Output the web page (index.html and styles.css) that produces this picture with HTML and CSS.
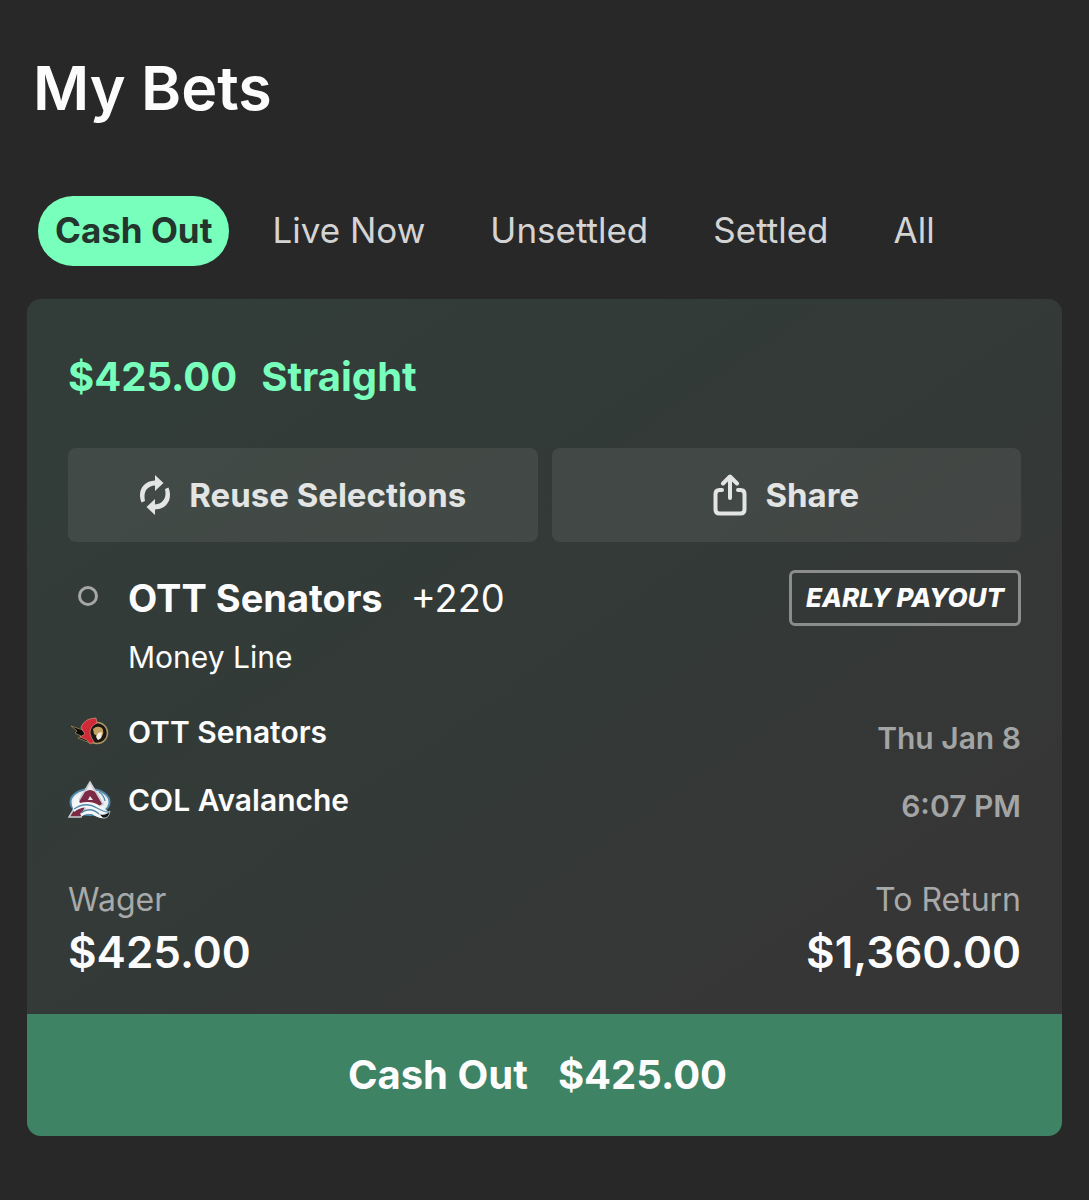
FILE: index.html
```
<!DOCTYPE html>
<html lang="en">
  <head>
    <meta charset="UTF-8" />
    <meta name="viewport" content="width=device-width, initial-scale=1.0" />
    <title>My Bets</title>
    <link rel="stylesheet" href="styles.css">
  </head>
  <body>
    <main class="page">
      <h1 class="title">My Bets</h1>

      <nav class="tabs">
        <button type="button" class="tab active">Cash Out</button>
        <button type="button" class="tab">Live Now</button>
        <button type="button" class="tab">Unsettled</button>
        <button type="button" class="tab">Settled</button>
        <button type="button" class="tab">All</button>
      </nav>

      <section class="bet">
        <div class="bet-body">
          <h2 class="bet-head">
            <span>$425.00</span>
            <span>Straight</span>
          </h2>

          <div class="actions">
            <button type="button" class="action">
              <svg class="icon-reuse" viewBox="0 0 32 42" width="32" height="42" aria-hidden="true">
                <path d="M16 1L24.500 9L16 17V11.500C8 12 4 18 6 27L2.500 28.500C-2 17 4 7 16 6.500Z" fill="#e3e5e4" />
                <path d="M16 41L7.500 33L16 25V30.500C24 30 28 24 26 15L29.500 13.500C34 25 28 35 16 35.500Z" fill="#e3e5e4" />
              </svg>
              Reuse Selections
            </button>
            <button type="button" class="action">
              <svg class="icon-share" viewBox="0 0 34 42" width="34" height="42" aria-hidden="true">
                <g fill="none" stroke="#e3e5e4" stroke-width="4" stroke-linecap="round" stroke-linejoin="round">
                  <path d="M9 16H6.5Q2.5 16 2.5 20V35.5Q2.5 39.500 6.500 39.500H27.500Q31.500 39.500 31.500 35.500V20Q31.500 16 27.500 16H25" />
                  <path d="M17 24V3" />
                  <path d="M10 9.500L17 2.500L24 9.500" />
                </g>
              </svg>
              Share
            </button>
          </div>

          <div class="selection">
            <span class="dot"></span>
            <span class="pick">OTT Senators</span>
            <span class="odds">+220</span>
            <span class="badge">EARLY PAYOUT</span>
          </div>
          <p class="market">Money Line</p>

          <div class="event">
            <ul class="teams">
              <li class="team">
                <svg class="logo" viewBox="0 0 44 44" width="44" height="44" aria-hidden="true">
                  <path d="M3 16L15 20L17 17L20 25L23 33L17 31L10 28L13 26L7 23L9 21Z" fill="#0b0b0b" stroke="#9c8555" stroke-width="0.800" />
                  <circle cx="29" cy="23" r="10.500" fill="#1a1715" stroke="#ad9662" stroke-width="1.500" />
                  <path d="M13 17Q17 8 28 8L29 13Q22 16 22 23Q23 28 26 32L22 34L19 30L12 27L17 24L15 21Z" fill="#d02a38" stroke="#d9a184" stroke-width="0.600" />
                  <path d="M25 19Q29 15 34 18Q37 22 33 28L30 30L29 26L26 24Z" fill="#c3a05f" />
                  <path d="M30 23L34 22L33 28L30 30L28 27Z" fill="#f4eee0" />
                </svg>
                OTT Senators
              </li>
              <li class="team">
                <svg class="logo" viewBox="0 0 44 44" width="44" height="44" aria-hidden="true">
                  <ellipse cx="22" cy="24" rx="19.500" ry="13" fill="#e9eef1" stroke="#5288ac" stroke-width="2" />
                  <path d="M22 4L35 26L29 30L18 28L13 39H1Z" fill="#7b2944" stroke="#c7cdd2" stroke-width="1.500" />
                  <path d="M22 5L27 14Q22 10 17 14Z" fill="#e9edef" />
                  <path d="M22 18L25 22H20Z" fill="#e9edef" />
                  <path d="M4 27Q6 18 14 15Q9 21 12 25Q24 22 32 28Q37 31 41 34L38 38Q30 36 26 32Q16 26 6 34Z" fill="#f4f7f8" />
                  <path d="M12 36Q20 27 29 34Q35 39 41 35L38 40Q30 41 24 36Q19 35 14 38Z" fill="#f4f7f8" />
                  <path d="M6 31Q18 23 29 30Q36 34 40 34M13 35Q22 28 31 36M31 14Q36 17 37 23" fill="none" stroke="#5288ac" stroke-width="1.300" />
                  <path d="M31 36Q37 38 42 33Q41 41 35 40Z" fill="#111719" stroke="#c7cdd2" stroke-width="0.800" />
                </svg>
                COL Avalanche
              </li>
            </ul>
            <div class="when">
              <span>Thu Jan 8</span>
              <span>6:07 PM</span>
            </div>
          </div>

          <dl class="totals">
            <div class="total">
              <dt>Wager</dt>
              <dd>$425.00</dd>
            </div>
            <div class="total right">
              <dt>To Return</dt>
              <dd>$1,360.00</dd>
            </div>
          </dl>
        </div>

        <button type="button" class="cash-out">
          <span>Cash Out</span>
          <span>$425.00</span>
        </button>
      </section>
    </main>
  </body>
</html>
```

FILE: styles.css
```
* {
  box-sizing: border-box;
}
body {
  margin: 0;
  background: #282828;
  color: #fcfcfc;
  font-family: Inter, "Liberation Sans", sans-serif;
}
button {
  border: 0;
  font-family: inherit;
  cursor: pointer;
}
h1,
h2,
p,
ul,
dl,
dd {
  margin: 0;
  padding: 0;
}
.page {
  padding: 48px 27px 64px;
}
.title {
  padding-left: 6px;
  font-size: 61px;
  font-weight: 600;
  line-height: 80px;
}
.tabs {
  display: flex;
  gap: 31px;
  margin: 68px 0 33px;
  padding-left: 11px;
}
.tab {
  height: 70px;
  padding: 0 17px 3px;
  border-radius: 35px;
  background: none;
  color: #d4d4d4;
  font-size: 35px;
  white-space: nowrap;
}
.tab.active {
  margin-right: -5px;
  background: #78ffbb;
  color: #24352d;
  font-weight: 700;
}
.bet {
  border-radius: 14px;
  overflow: hidden;
  background: linear-gradient(145deg, #323d39 0%, #333a37 45%, #363636 75%);
}
.bet-body {
  padding: 54px 41px 34px;
}
.bet-head {
  display: flex;
  gap: 24px;
  color: #78ffbb;
  font-size: 40px;
  font-weight: 700;
  line-height: 48px;
}
.actions {
  display: flex;
  gap: 14px;
  margin: 47px 0 28px;
}
.action {
  display: flex;
  flex: 1;
  align-items: center;
  justify-content: center;
  gap: 18px;
  height: 94px;
  border-radius: 8px;
  background: rgba(255, 255, 255, 0.075);
  color: #e3e5e4;
  font-size: 33px;
  font-weight: 700;
}
.selection {
  display: flex;
  align-items: center;
  height: 56px;
  font-size: 38px;
}
.dot {
  width: 20px;
  height: 20px;
  margin: 0 30px 4px 10px;
  border: 3px solid #a5a8a7;
  border-radius: 50%;
}
.pick {
  font-weight: 700;
}
.odds {
  margin-left: 28px;
}
.badge {
  margin-left: auto;
  padding: 0 14px;
  border: 3px solid #8b8d8c;
  border-radius: 6px;
  font-size: 26px;
  font-style: italic;
  font-weight: 800;
  line-height: 50px;
}
.market {
  margin: 11px 0 33px;
  padding-left: 60px;
  font-size: 30px;
  line-height: 40px;
}
.event {
  display: flex;
  justify-content: space-between;
}
.teams,
.when {
  display: flex;
  flex-direction: column;
  gap: 24px;
  font-size: 30px;
  font-weight: 600;
  line-height: 44px;
}
.teams {
  list-style: none;
}
.team {
  display: flex;
  gap: 16px;
}
.when {
  padding-top: 6px;
  color: #a3a4a4;
  text-align: right;
}
.totals {
  display: flex;
  justify-content: space-between;
  margin-top: 52px;
}
.total dt {
  color: #a8a9a9;
  font-size: 32px;
  line-height: 40px;
}
.total dd {
  margin-top: 4px;
  font-size: 44px;
  font-weight: 600;
  line-height: 56px;
}
.right {
  text-align: right;
}
.cash-out {
  display: flex;
  align-items: center;
  justify-content: center;
  gap: 30px;
  width: 100%;
  height: 122px;
  padding: 0 20px 2px 6px;
  background: #3e8363;
  color: #fcfcfc;
  font-size: 40px;
  font-weight: 700;
}
```
